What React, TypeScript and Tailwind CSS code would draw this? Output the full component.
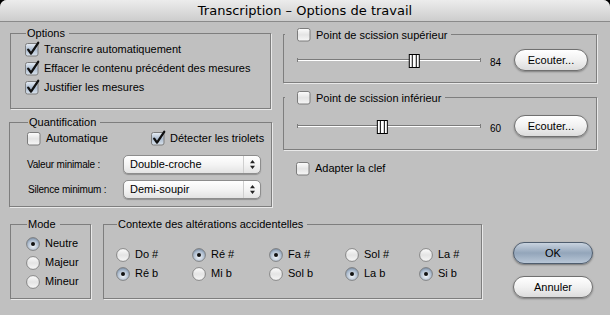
import type { ReactNode } from "react";

const Check = ({ on = false }: { on?: boolean }) => (
  <svg width="15" height="15" viewBox="0 0 15 15" className="shrink-0 overflow-visible">
    <rect x="0.5" y="1.5" width="12.5" height="12.5" rx="2" fill={on ? "url(#cbOn)" : "url(#cbOff)"} stroke="#7c7c7c" />
    {on && (
      <path d="M3.2 7.6 L6 11.6 L13.2 0.8" fill="none" stroke="#111" strokeWidth="2.3" strokeLinecap="round" strokeLinejoin="round" />
    )}
  </svg>
);

const Radio = ({ on = false }: { on?: boolean }) => (
  <svg width="14" height="14" viewBox="0 0 14 14" className="shrink-0">
    <circle cx="7" cy="7" r="6.4" fill={on ? "url(#rdOn)" : "url(#cbOff)"} stroke="#7c7c7c" strokeWidth="0.9" />
    {on && <circle cx="7" cy="7" r="2" fill="#111" />}
  </svg>
);

const CheckRow = ({ on, label, className = "" }: { on?: boolean; label: string; className?: string }) => (
  <div className={`flex items-center gap-[4px] whitespace-nowrap ${className}`}>
    <Check on={on} />
    <span>{label}</span>
  </div>
);

const RadioRow = ({ on, label }: { on?: boolean; label: string }) => (
  <div className="flex h-[19px] items-center gap-[5px] whitespace-nowrap">
    <Radio on={on} />
    <span>{label}</span>
  </div>
);

const Group = ({ legend, className = "", children }: { legend: ReactNode; className?: string; children: ReactNode }) => (
  <fieldset className={`min-w-0 border border-[#7e7e7e] shadow-[1px_1px_0_#e9e9e9] ${className}`}>
    <legend className="ml-[1px] pl-[1px] pr-[4px] text-[11px] leading-[12px]">{legend}</legend>
    {children}
  </fieldset>
);

const Popup = ({ value }: { value: string }) => (
  <div className="flex h-[19px] w-[138px] items-center rounded-[5px] border border-[#8d8d8d] bg-gradient-to-b from-white via-[#f4f4f4] to-[#e3e3e3] shadow-[0_1px_1px_rgba(0,0,0,0.25)]">
    <span className="flex-1 pl-[6px]">{value}</span>
    <div className="flex h-full w-[17px] items-center justify-center border-l border-[#cfcfcf]">
      <svg width="7" height="11" viewBox="0 0 7 11">
        <path d="M3.5 1 L6 4.2 H1 Z M3.5 10 L6 6.8 H1 Z" fill="#222" />
      </svg>
    </div>
  </div>
);

const Slider = ({ value }: { value: number }) => {
  const x = value * (169 / 127);
  return (
    <svg width="184" height="22" viewBox="0 0 184 22" className="shrink-0">
      <line x1="0" y1="10.5" x2="184" y2="10.5" stroke="#7b7b7b" />
      <line x1="1" y1="11.5" x2="184" y2="11.5" stroke="#ffffff" />
      <line x1="0.5" y1="9" x2="0.5" y2="13" stroke="#7b7b7b" />
      <line x1="183.5" y1="9" x2="183.5" y2="13" stroke="#7b7b7b" />
      <rect x={x + 0.5} y="5.5" width="10" height="13" fill="#ffffff" stroke="#000" />
      <line x1={x + 3.5} y1="6" x2={x + 3.5} y2="18" stroke="#000" />
      <line x1={x + 7.5} y1="6" x2={x + 7.5} y2="18" stroke="#000" />
    </svg>
  );
};

const AquaButton = ({ label }: { label: string }) => (
  <button className="h-[22px] w-[74px] rounded-full border border-[#707070] bg-gradient-to-b from-white via-[#f1f1f1] to-[#dcdcdc] text-[11px] shadow-[0_1px_2px_rgba(0,0,0,0.35)]">
    {label}
  </button>
);

const SliderRow = ({ value }: { value: number }) => (
  <div className="flex items-center pl-[13px]">
    <Slider value={value} />
    <span className="ml-[9px] w-[24px] pt-[6px] text-[10px] leading-[12px]">{value}</span>
    <AquaButton label="Ecouter..." />
  </div>
);

const accidentals: [string, boolean][] = [
  ["Do #", false],
  ["Ré #", true],
  ["Fa #", true],
  ["Sol #", false],
  ["La #", false],
  ["Ré b", true],
  ["Mi b", false],
  ["Sol b", false],
  ["La b", true],
  ["Si b", true],
];

export default function App() {
  return (
    <div className="h-[315px] w-[610px] bg-black font-['Liberation_Sans',Arial,sans-serif] text-[11px] leading-[13px] text-black">
      <svg width="0" height="0" className="absolute">
        <defs>
          <linearGradient id="cbOff" x1="0" y1="0" x2="0" y2="1">
            <stop offset="0" stopColor="#fdfdfd" />
            <stop offset="0.5" stopColor="#e4e4e4" />
            <stop offset="1" stopColor="#f7f7f7" />
          </linearGradient>
          <linearGradient id="cbOn" x1="0" y1="0" x2="0" y2="1">
            <stop offset="0" stopColor="#e9eff6" />
            <stop offset="0.5" stopColor="#adbdd0" />
            <stop offset="1" stopColor="#d9e2ec" />
          </linearGradient>
          <radialGradient id="rdOn" cx="0.5" cy="0.65" r="0.6">
            <stop offset="0" stopColor="#f2f5f9" />
            <stop offset="0.7" stopColor="#aebdcf" />
            <stop offset="1" stopColor="#8396ad" />
          </radialGradient>
        </defs>
      </svg>
      <div className="flex h-full flex-col overflow-hidden rounded-t-[7px] bg-[#c0c0c0]">
        <div className="flex h-[22px] shrink-0 items-center justify-center border-b border-[#8a8a8a] bg-gradient-to-b from-[#ececec] to-[#cdcdcd] font-['DejaVu_Sans',sans-serif] text-[13px]">
          Transcription – Options de travail
        </div>

        <div className="flex items-start pt-[5px]">
          <div className="ml-[9px] flex w-[263px] flex-col">
            <Group legend="Options" className="ml-[1px] w-[261px] pb-[11px] pl-[14px]">
              <div className="flex flex-col pt-[1px]">
                <CheckRow on label="Transcrire automatiquement" className="h-[19px]" />
                <CheckRow on label="Effacer le contenu précédent des mesures" className="h-[19px]" />
                <CheckRow on label="Justifier les mesures" className="h-[19px]" />
              </div>
            </Group>

            <Group legend="Quantification" className="mt-[7px] pb-[7px] pl-[17px]">
              <div className="flex h-[16px] items-center pt-[4px]">
                <CheckRow label="Automatique" className="w-[124px]" />
                <CheckRow on label="Détecter les triolets" />
              </div>
              <div className="mt-[11px] flex items-center">
                <span className="w-[96px] text-[10px] tracking-[-0.2px]">Valeur minimale :</span>
                <Popup value="Double-croche" />
              </div>
              <div className="mt-[6px] flex items-center">
                <span className="w-[96px] pl-[1px] text-[10px] tracking-[-0.2px]">Silence minimum :</span>
                <Popup value="Demi-soupir" />
              </div>
            </Group>
          </div>

          <div className="ml-[11px] flex w-[314px] flex-col">
            <Group
              legend={
                <span className="-ml-[1px] flex items-center gap-[4px] pl-[12px]">
                  <Check />
                  <span>Point de scission supérieur</span>
                </span>
              }
              className="pb-[11px]"
            >
              <div className="pt-[7px]">
                <SliderRow value={84} />
              </div>
            </Group>

            <Group
              legend={
                <span className="-ml-[1px] flex items-center gap-[4px] pl-[12px]">
                  <Check />
                  <span>Point de scission inférieur</span>
                </span>
              }
              className="mt-[7px] pb-[12px]"
            >
              <div className="pt-[10px]">
                <SliderRow value={60} />
              </div>
            </Group>

            <CheckRow label="Adapter la clef" className="ml-[13px] mt-[11px]" />
          </div>
        </div>

        <div className="mt-[11px] flex items-start">
          <Group legend="Mode" className="ml-[10px] w-[81px] pb-[7px] pl-[15px]">
            <div className="flex flex-col pt-[4px]">
              <RadioRow on label="Neutre" />
              <RadioRow label="Majeur" />
              <RadioRow label="Mineur" />
            </div>
          </Group>

          <Group legend="Contexte des altérations accidentelles" className="ml-[12px] w-[379px] pb-[15px] pl-[12px]">
            <div className="grid grid-cols-[76px_77px_76px_74px_1fr] pt-[15px]">
              {accidentals.map(([label, on]) => (
                <RadioRow key={label} on={on} label={label} />
              ))}
            </div>
          </Group>

          <div className="ml-[31px] mt-[24px] flex flex-col gap-[12px]">
            <button className="h-[22px] w-[80px] rounded-full border border-[#4f5d6e] bg-gradient-to-b from-[#c9d3df] via-[#93a5ba] to-[#b8c6d6] text-[11px] shadow-[0_1px_2px_rgba(0,0,0,0.4)]">
              OK
            </button>
            <button className="h-[22px] w-[80px] rounded-full border border-[#707070] bg-gradient-to-b from-white via-[#f1f1f1] to-[#dcdcdc] text-[11px] shadow-[0_1px_2px_rgba(0,0,0,0.35)]">
              Annuler
            </button>
          </div>
        </div>
      </div>
    </div>
  );
}
